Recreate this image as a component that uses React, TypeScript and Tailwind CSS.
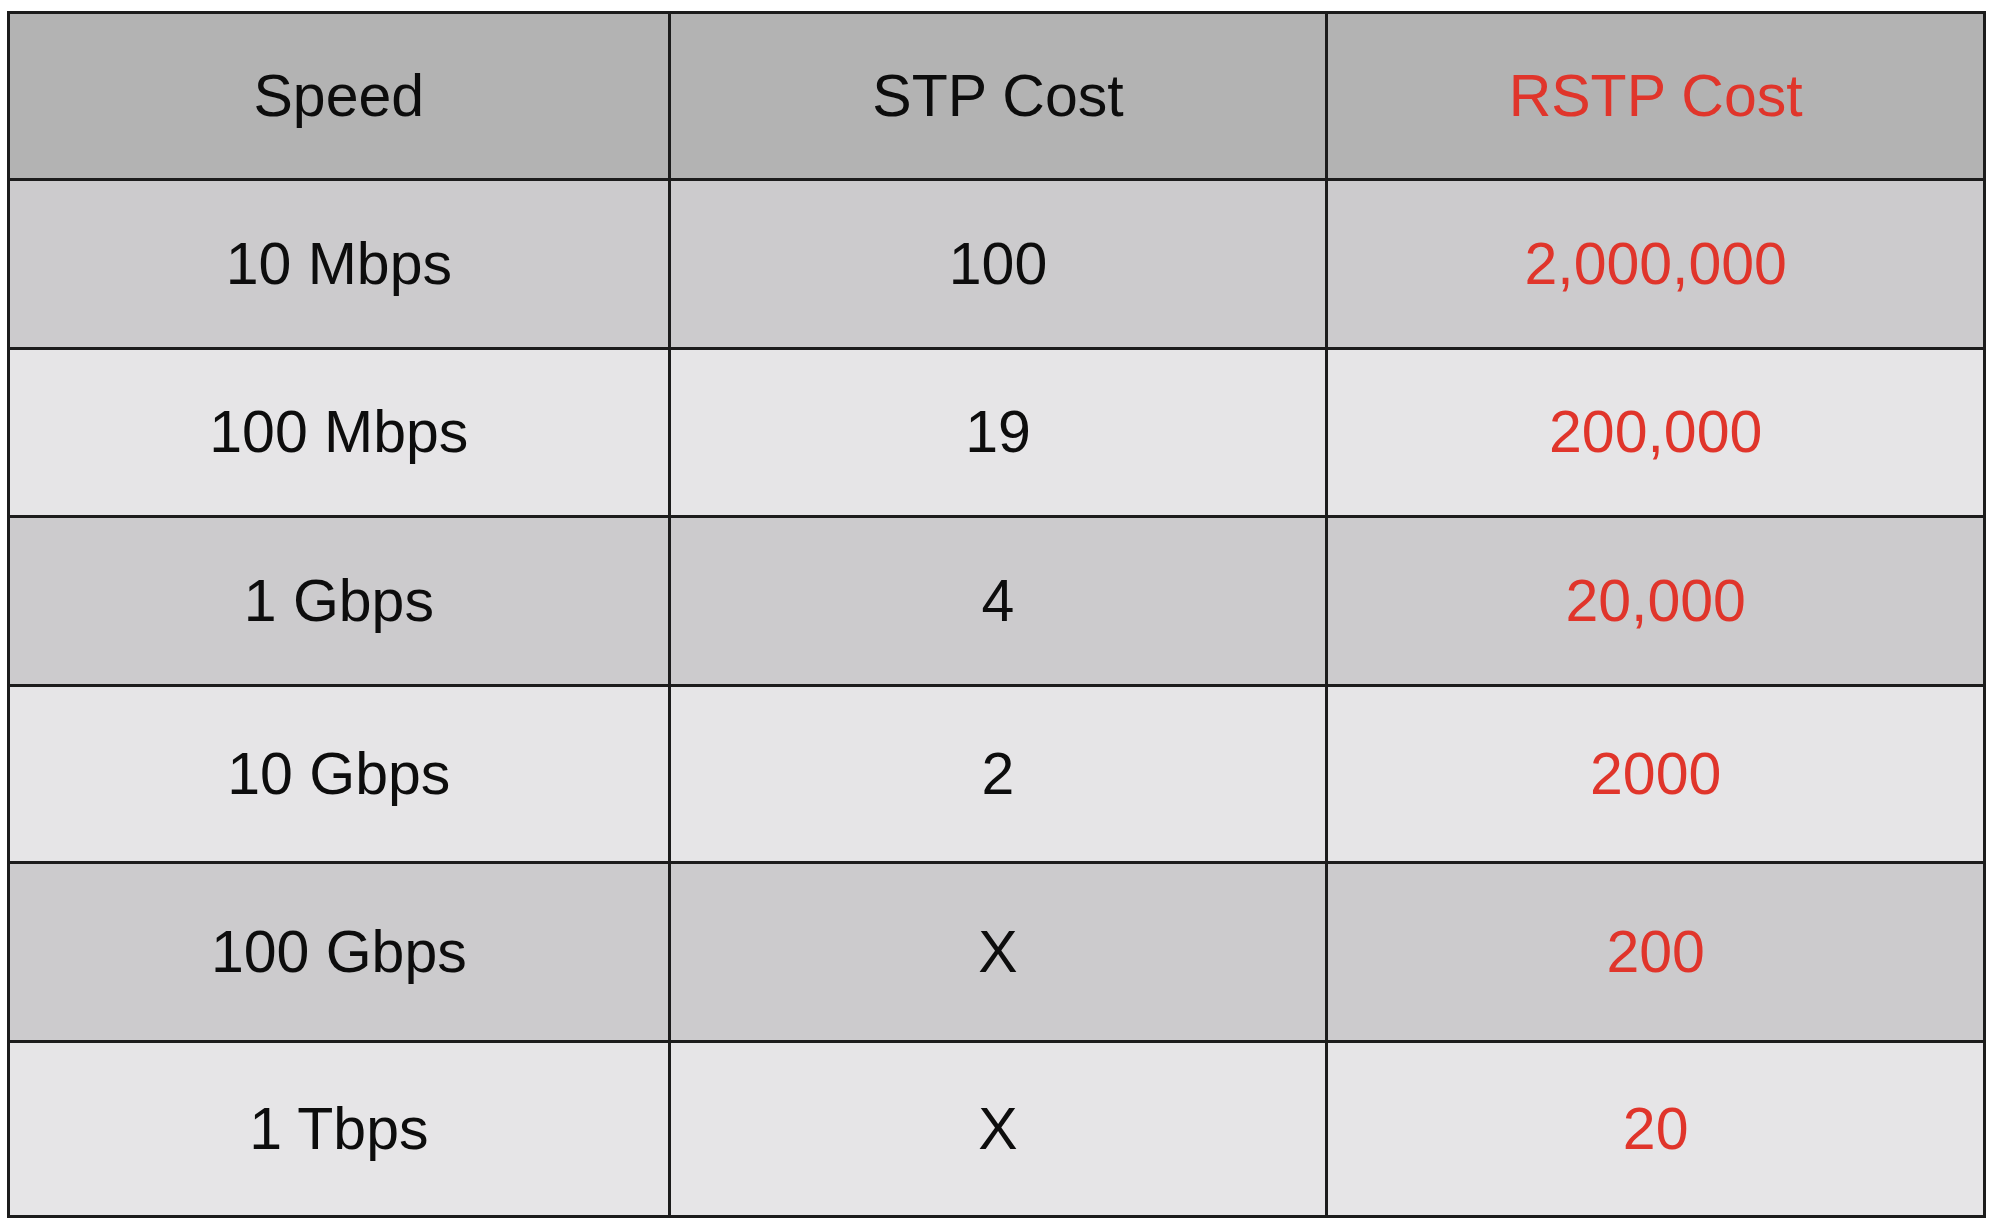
const rows = [
  { speed: "10 Mbps", stp: "100", rstp: "2,000,000", h: "h-[169px]", bg: "bg-[#cccbcd]" },
  { speed: "100 Mbps", stp: "19", rstp: "200,000", h: "h-[168px]", bg: "bg-[#e6e5e7]" },
  { speed: "1 Gbps", stp: "4", rstp: "20,000", h: "h-[169px]", bg: "bg-[#cccbcd]" },
  { speed: "10 Gbps", stp: "2", rstp: "2000", h: "h-[177px]", bg: "bg-[#e6e5e7]" },
  { speed: "100 Gbps", stp: "X", rstp: "200", h: "h-[179px]", bg: "bg-[#cccbcd]" },
  { speed: "1 Tbps", stp: "X", rstp: "20", h: "h-[175px]", bg: "bg-[#e6e5e7]" },
];

function Cell({ children, red, first }: { children: React.ReactNode; red?: boolean; first?: boolean }) {
  return (
    <div
      className={`flex items-center justify-center ${first ? "" : "border-l-[3px] border-[#1c1c1c]"} ${
        red ? "text-[#e0352b]" : "text-[#0d0d0d]"
      }`}
    >
      {children}
    </div>
  );
}

export default function App() {
  return (
    <div className="min-h-[1229px] w-[2000px] bg-white pl-[7px] pt-[11px] font-['Liberation_Sans',Arial,sans-serif] text-[59px] leading-none">
      <div className="flex w-[1979px] flex-col border-[3px] border-[#1c1c1c]">
        <div className="grid h-[164px] grid-cols-3 bg-[#b3b3b3]">
          <Cell first>Speed</Cell>
          <Cell>STP Cost</Cell>
          <Cell red>RSTP Cost</Cell>
        </div>
        {rows.map((r) => (
          <div key={r.speed} className={`grid grid-cols-3 border-t-[3px] border-[#1c1c1c] ${r.h} ${r.bg}`}>
            <Cell first>{r.speed}</Cell>
            <Cell>{r.stp}</Cell>
            <Cell red>{r.rstp}</Cell>
          </div>
        ))}
      </div>
    </div>
  );
}
